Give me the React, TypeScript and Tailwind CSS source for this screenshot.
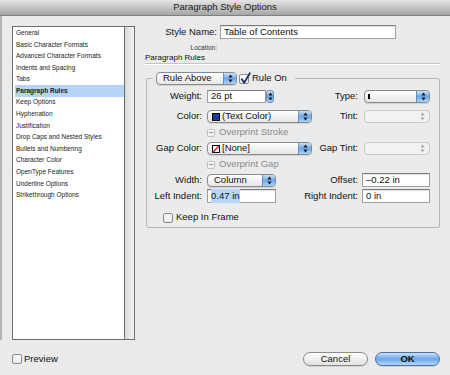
import React from "react";

const sections = [
  "General",
  "Basic Character Formats",
  "Advanced Character Formats",
  "Indents and Spacing",
  "Tabs",
  "Paragraph Rules",
  "Keep Options",
  "Hyphenation",
  "Justification",
  "Drop Caps and Nested Styles",
  "Bullets and Numbering",
  "Character Color",
  "OpenType Features",
  "Underline Options",
  "Strikethrough Options",
];

function Arrows({ color = "#1a1a1a" }: { color?: string }) {
  return (
    <svg width="5" height="9" viewBox="0 0 5 9">
      <path d="M2.5 0.5 L4.6 3.4 L0.4 3.4 Z" fill={color} />
      <path d="M0.4 5.6 L4.6 5.6 L2.5 8.5 Z" fill={color} />
    </svg>
  );
}

function Popup({ w, disabled, children }: { w: string; disabled?: boolean; children?: React.ReactNode }) {
  return (
    <div
      className={`flex h-[13px] items-stretch rounded-[4px] border ${w} ${
        disabled
          ? "border-[#c9c9c9] bg-[#f2f2f2]"
          : "border-[#8a8a8a] bg-gradient-to-b from-white to-[#e6e6e6] shadow-[0_1px_0_rgba(0,0,0,0.1)]"
      }`}
    >
      <div className="flex flex-1 items-center overflow-hidden whitespace-nowrap">{children}</div>
      {disabled ? (
        <div className="flex w-[13px] items-center justify-center">
          <Arrows color="#a8a8a8" />
        </div>
      ) : (
        <div className="flex w-[13px] items-center justify-center rounded-r-[3px] border-l border-[#6b8fbf] bg-gradient-to-b from-[#c6e0fa] via-[#6ea8e8] to-[#a9d2f7]">
          <Arrows />
        </div>
      )}
    </div>
  );
}

function Field({ w, children }: { w: string; children?: React.ReactNode }) {
  return (
    <div
      className={`flex h-[14px] items-center border border-[#a0a0a0] border-t-[#7a7a7a] bg-white pl-[3px] shadow-[inset_0_1px_1px_rgba(0,0,0,0.12)] ${w}`}
    >
      {children}
    </div>
  );
}

function Check({ checked, size = "w-[10px] h-[10px]" }: { checked?: boolean; size?: string }) {
  return (
    <div className={`relative rounded-[2px] border border-[#8c8c8c] bg-gradient-to-b from-white to-[#e8e8e8] ${size}`}>
      {checked && (
        <svg className="absolute -top-[3px] left-0" width="11" height="13" viewBox="0 0 11 13">
          <path d="M1.8 7.2 L4.3 10.6 L9.8 1.2" fill="none" stroke="#1d2f66" strokeWidth="1.8" strokeLinecap="round" strokeLinejoin="round" />
        </svg>
      )}
    </div>
  );
}

function MixedCheck() {
  return (
    <div className="flex h-[8px] w-[8px] items-center justify-center rounded-[1px] border border-[#c2c2c2] bg-[#f4f4f4]">
      <div className="h-px w-[4px] bg-[#9a9a9a]" />
    </div>
  );
}

export default function App() {
  return (
    <div className="h-[375px] w-[450px] overflow-hidden bg-[#ebebeb] font-['Liberation_Sans',Arial,sans-serif] text-[9.5px] text-[#111]">
      {/* Title bar */}
      <div className="flex h-[16px] items-center justify-center border-b border-[#7f7f7f] bg-gradient-to-b from-[#e4e4e4] to-[#a6a6a6] text-[9.5px] text-[#1a1a1a]">
        Paragraph Style Options
      </div>

      <div className="flex h-[324px] shadow-[inset_2px_0_0_#b4b4b4]">
        {/* Section list */}
        <div className="w-[145px]">
          <div className="ml-[12px] mt-[10px] flex h-[314px] w-[123px] border border-[#6e6e6e] bg-white">
            <div className="flex-1 pl-[2px] pt-0">
              {sections.map((s) => (
                <div
                  key={s}
                  className={`flex h-[11.6px] items-center whitespace-nowrap pl-[1px] text-[6.5px] text-[#1a1a1a] ${
                    s === "Paragraph Rules" ? "bg-[#b6d4f5] font-bold" : ""
                  }`}
                >
                  {s}
                </div>
              ))}
            </div>
            <div className="w-[10px] border-l border-[#6e6e6e] bg-gradient-to-r from-[#d9d9d9] to-[#f5f5f5]" />
          </div>
        </div>

        {/* Options panel */}
        <div className="flex-1">
          <div className="mt-[9px] flex h-[14px] items-center">
            <div className="w-[72px] text-right">Style Name:</div>
            <Field w="ml-[3px] w-[176px]">Table of Contents</Field>
          </div>
          <div className="mt-[5px] flex h-[8px] items-center">
            <div className="w-[72px] text-right text-[6.5px] text-[#333]">Location:</div>
          </div>
          <div className="h-[11px] text-[8px] leading-[11px]">Paragraph Rules</div>
          <div className="mr-[10px] h-px bg-[#c4c4c4]" />
          <div className="mr-[10px] h-px bg-white" />

          <fieldset className="ml-[1px] mt-[7px] h-[156px] w-[294px] min-w-0 rounded-[2px] border border-[#b6b6b6]">
            <legend className="ml-[6px] pl-[3px] pr-[8px]">
              <div className="flex h-[13px] items-center">
                <Popup w="w-[81px]">
                  <span className="pl-[6px]">Rule Above</span>
                </Popup>
                <div className="ml-[2px]">
                  <Check checked size="w-[10px] h-[10px]" />
                </div>
                <span className="ml-[3px]">Rule On</span>
              </div>
            </legend>

            <div className="mt-[5px] flex h-[13px] items-center pr-[9px]">
              <div className="w-[55px] text-right">Weight:</div>
              <div className="ml-[5px] flex h-[13px] w-[67px] items-stretch">
                <div className="flex flex-1 items-center border border-[#a0a0a0] border-t-[#7a7a7a] bg-white pl-[3px]">26 pt</div>
                <div className="flex w-[8px] items-center justify-center rounded-[3px] border border-[#6b8fbf] bg-gradient-to-b from-[#c6e0fa] via-[#6ea8e8] to-[#a9d2f7]">
                  <Arrows />
                </div>
              </div>
              <div className="flex-1 text-right">Type:</div>
              <div className="ml-[6px]">
                <Popup w="w-[66px]">
                  <div className="ml-[3px] h-[5px] w-[2px] bg-black" />
                </Popup>
              </div>
            </div>

            <div className="mt-[7px] flex h-[13px] items-center pr-[9px]">
              <div className="w-[55px] text-right">Color:</div>
              <div className="ml-[5px]">
                <Popup w="w-[105px]">
                  <div className="ml-[4px] h-[8px] w-[8px] border border-black bg-[#1d3d8e]" />
                  <span className="ml-[2px]">(Text Color)</span>
                </Popup>
              </div>
              <div className="flex-1 text-right">Tint:</div>
              <div className="ml-[6px]">
                <Popup w="w-[66px]" disabled />
              </div>
            </div>

            <div className="mt-[3px] flex h-[13px] items-center">
              <div className="ml-[60px]">
                <MixedCheck />
              </div>
              <span className="ml-[4px] text-[#8a8a8a]">Overprint Stroke</span>
            </div>

            <div className="mt-[3px] flex h-[13px] items-center pr-[9px]">
              <div className="w-[55px] text-right">Gap Color:</div>
              <div className="ml-[5px]">
                <Popup w="w-[105px]">
                  <svg className="ml-[4px]" width="8" height="8" viewBox="0 0 8 8">
                    <rect x="0.5" y="0.5" width="7" height="7" fill="white" stroke="black" />
                    <path d="M1 7 L7 1" stroke="#e02020" strokeWidth="1.6" />
                  </svg>
                  <span className="ml-[2px]">[None]</span>
                </Popup>
              </div>
              <div className="flex-1 text-right">Gap Tint:</div>
              <div className="ml-[6px]">
                <Popup w="w-[66px]" disabled />
              </div>
            </div>

            <div className="mt-[3px] flex h-[13px] items-center">
              <div className="ml-[60px]">
                <MixedCheck />
              </div>
              <span className="ml-[4px] text-[#8a8a8a]">Overprint Gap</span>
            </div>

            <div className="mt-[2px] flex h-[14px] items-center pr-[9px]">
              <div className="w-[55px] text-right">Width:</div>
              <div className="ml-[5px]">
                <Popup w="w-[69px]">
                  <span className="pl-[6px]">Column</span>
                </Popup>
              </div>
              <div className="flex-1 text-right">Offset:</div>
              <Field w="ml-[4px] w-[68px]">–0.22 in</Field>
            </div>

            <div className="mt-[2px] flex h-[14px] items-center pr-[9px]">
              <div className="w-[55px] whitespace-nowrap text-right">Left Indent:</div>
              <Field w="ml-[5px] w-[69px]">
                <span className="bg-[#b5d5fd]">0.47 in</span>
              </Field>
              <div className="flex-1 whitespace-nowrap text-right">Right Indent:</div>
              <Field w="ml-[4px] w-[68px]">0 in</Field>
            </div>

            <div className="mt-[9px] flex h-[11px] items-center">
              <div className="ml-[16px]">
                <Check />
              </div>
              <span className="ml-[3px]">Keep In Frame</span>
            </div>
          </fieldset>
        </div>
      </div>

      {/* Footer */}
      <div className="mt-[12px] flex h-[14px] items-center justify-between pl-[12px] pr-[10px]">
        <div className="flex items-center">
          <Check />
          <span className="ml-[2px]">Preview</span>
        </div>
        <div className="flex gap-[7px]">
          <button className="flex h-[14px] w-[65px] items-center justify-center rounded-full border border-[#8a8a8a] bg-gradient-to-b from-white to-[#e2e2e2] text-[9.5px] shadow-[0_1px_0_rgba(0,0,0,0.1)]">
            Cancel
          </button>
          <button className="flex h-[14px] w-[65px] items-center justify-center rounded-full border border-[#4d6fa3] bg-gradient-to-b from-[#c8e1fa] via-[#6aa6e8] to-[#b4dafa] text-[9.5px] font-bold shadow-[0_1px_0_rgba(0,0,0,0.1)]">
            OK
          </button>
        </div>
      </div>
    </div>
  );
}
